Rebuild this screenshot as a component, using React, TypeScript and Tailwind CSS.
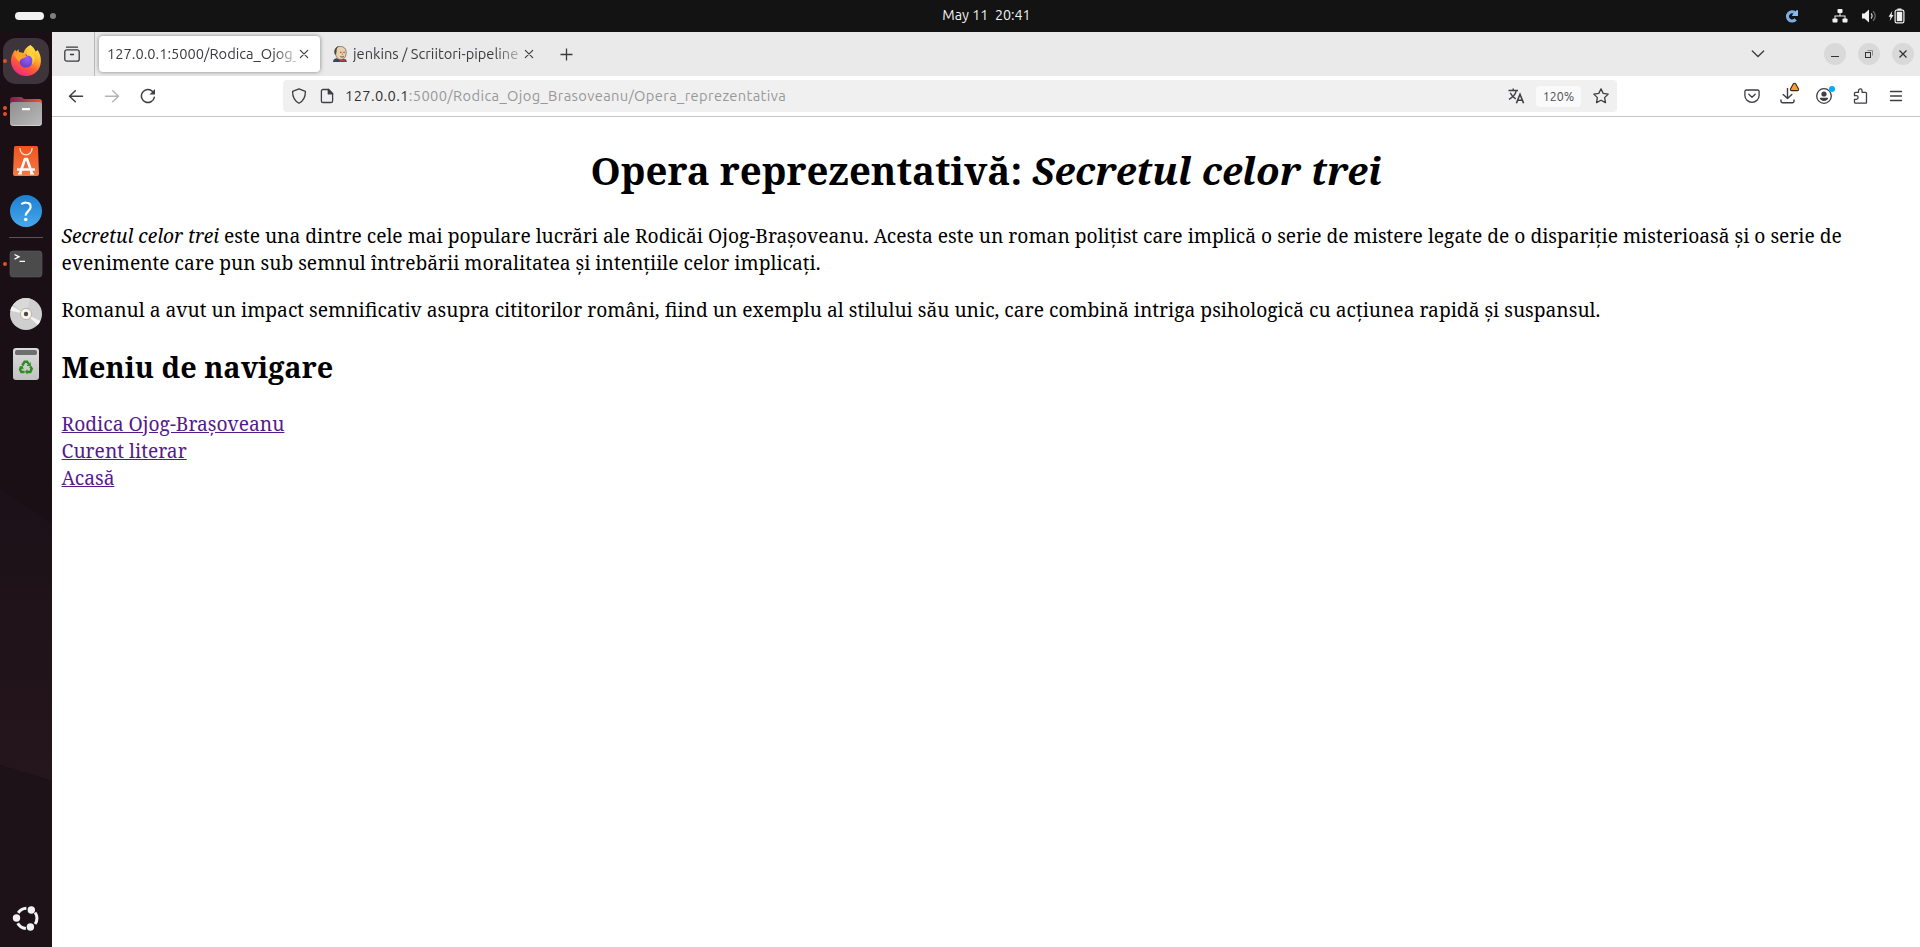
import React, { ReactNode } from "react";

/* ---------- shared icon wrapper ---------- */

function Line({ children, size = 16, className = "" }: { children: ReactNode; size?: number; className?: string }) {
  return (
    <svg
      width={size}
      height={size}
      viewBox="0 0 16 16"
      fill="none"
      stroke="currentColor"
      strokeWidth="1.3"
      strokeLinecap="round"
      strokeLinejoin="round"
      className={`block shrink-0 ${className}`}
    >
      {children}
    </svg>
  );
}

function CloseX() {
  return (
    <svg width="10" height="10" viewBox="0 0 10 10" fill="none" stroke="currentColor" strokeWidth="1.15" strokeLinecap="round" className="block shrink-0">
      <path d="M1.3 1.3l7.4 7.4M8.7 1.3L1.3 8.7" />
    </svg>
  );
}

/* ---------- top bar ---------- */

function TopBar() {
  return (
    <header className="flex h-8 shrink-0 items-center bg-[#131313] text-[#f2f2f2]">
      <div className="flex flex-1 items-center gap-1.5 pl-[15px]">
        <span className="h-2 w-[29px] rounded-full bg-[#f2f2f2]" />
        <span className="size-1.5 rounded-full bg-[#7f7f7f]" />
      </div>
      <div className="whitespace-pre pl-[53px] text-[14.3px] leading-[30px] pb-0.5">{"May 11  20:41"}</div>
      <div className="flex flex-1 items-center justify-end pr-[15px]">
        <svg width="14" height="14" viewBox="0 0 14 14" className="mr-[33px] block translate-y-[0.5px]">
          <path d="M10.6 9.9A4.6 4.6 0 1 1 10 3.3" fill="none" stroke="#79aee6" strokeWidth="3.2" />
          <path d="M7.2 6.6V5.4L9.6 3.2 11.4.8H13v5.8z" fill="#8dbcec" />
        </svg>
        <svg width="16" height="14" viewBox="0 0 16 14" fill="#f2f2f2" className="mr-3.5 block">
          <rect x="5.5" y="0" width="5" height="4" rx=".8" />
          <rect x="0.5" y="9.5" width="5" height="4" rx=".8" />
          <rect x="10.5" y="9.5" width="5" height="4" rx=".8" />
          <path d="M7.5 4h1v2.5h5V10h-1V7.5h-9V10h-1V6.5h5z" />
        </svg>
        <svg width="16" height="14" viewBox="0 0 16 14" className="mr-2.5 block">
          <path d="M0 4.5h2.5L7 .4v13.2L2.5 9.500H0z" fill="#f2f2f2" />
          <path d="M9 4.6a3.2 3.2 0 0 1 0 4.8" fill="none" stroke="#d0d0d0" strokeWidth="1.3" />
          <path d="M11 2.2a6.3 6.3 0 0 1 0 9.6" fill="none" stroke="#6b6b6b" strokeWidth="1.3" />
        </svg>
        <svg width="17" height="16" viewBox="0 0 17 16" className="block">
          <path d="M4.3 3L.6 8.8h2L1.7 13l3.8-5.900H3.6z" fill="#f2f2f2" />
          <path d="M9.5 0.5h4v1.500h-4z" fill="#f2f2f2" />
          <rect x="7.1" y="2.1" width="8.8" height="12.8" rx="1.6" fill="none" stroke="#f2f2f2" strokeWidth="1.2" />
          <rect x="8.8" y="3.8" width="5.4" height="9.4" fill="#f2f2f2" />
        </svg>
      </div>
    </header>
  );
}

/* ---------- dock ---------- */

function DockItem({ children, dots = 0 }: { children: ReactNode; dots?: number }) {
  return (
    <svg width="52" height="50" viewBox="0 0 52 50" className="block shrink-0">
      {dots === 1 && <circle cx="5" cy="25" r="2" fill="#e4511f" />}
      {dots === 2 && (
        <>
          <circle cx="5" cy="22" r="2" fill="#e4511f" />
          <circle cx="5" cy="28" r="2" fill="#e4511f" />
        </>
      )}
      {children}
    </svg>
  );
}

function Dock() {
  return (
    <nav className="relative flex w-[52px] shrink-0 flex-col overflow-hidden bg-[#190f15] pt-1">
      <svg width="52" height="915" viewBox="0 0 52 915" className="absolute left-0 top-0" preserveAspectRatio="none">
        <defs>
          <linearGradient id="wall" x1="0" y1="0" x2="0" y2="1">
            <stop offset="0" stopColor="#1c1118" />
            <stop offset="1" stopColor="#25151c" />
          </linearGradient>
        </defs>
        <path d="M0 458L52 492V749L0 733z" fill="url(#wall)" />
        <path d="M0 733L52 749V915H0z" fill="#1d1218" />
      </svg>
      <div className="relative flex flex-1 flex-col">
        <DockItem>
          <defs>
            <linearGradient id="ffBody" x1=".8" y1="0" x2=".25" y2="1">
              <stop offset="0" stopColor="#fff14f" />
              <stop offset=".35" stopColor="#ffb22c" />
              <stop offset=".65" stopColor="#ff5a35" />
              <stop offset="1" stopColor="#f0208a" />
            </linearGradient>
            <radialGradient id="ffGlobe" cx=".6" cy=".3" r=".8">
              <stop offset="0" stopColor="#9a5cf5" />
              <stop offset="1" stopColor="#5a3bc4" />
            </radialGradient>
          </defs>
          <rect x="3" y="2" width="46" height="46" rx="13" fill="#3e343b" />
          <circle cx="5" cy="25" r="2" fill="#e4511f" />
          <path
            d="M30.4 9c2.600 1.700 4.400 4.200 5.200 6.400 1-.3 1.600-1 2-1.500 2.300 3.600 3.600 7.400 3.300 11.800C40.400 34 34 40 26.200 40 17.800 40 11.200 33.600 11 25.200c0-4 1.200-7.200 3-9.900l1.300-1.500.8 2 2.400-2.500.5 3.400c1.500-.4 3-.3 4.500.4 1-3.500 3.400-6.500 6.900-8.100z"
            fill="url(#ffBody)"
          />
          <circle cx="26" cy="25" r="6.600" fill="url(#ffGlobe)" />
          <path d="M14 18.500c3-2.700 6.300-2.900 9-1.200l4 3.200c-1.700.2-2.400 1.600-4.300 2.100-1.900.6-3.200 1.600-2.700 3.500-2.500-1.700-4.500-4.400-6-7.600z" fill="#ffa22b" />
          <path d="M27 19.500c2.200-.4 4.200.8 5.200 2.700.8 2 .5 4.400-.9 6.200 3.400-1.600 4.600-6 2.500-9.400-1.600-2.300-3.300-4.300-3.400-7.600-2.600 2.200-4 4.700-3.400 8.100z" fill="#ffd13b" />
        </DockItem>
        <DockItem dots={2}>
          <defs>
            <linearGradient id="folderBack" x1="0" y1="0" x2="1" y2="0">
              <stop offset="0" stopColor="#7a2150" />
              <stop offset="1" stopColor="#ec5a28" />
            </linearGradient>
            <linearGradient id="folderFront" x1="0" y1="0" x2="1" y2="1">
              <stop offset="0" stopColor="#8f8f8f" />
              <stop offset="1" stopColor="#bababa" />
            </linearGradient>
          </defs>
          <path d="M10 24V14a3 3 0 0 1 3-3h8c1.500 0 2 2 3.500 2H39a3 3 0 0 1 3 3v10z" fill="url(#folderBack)" />
          <rect x="10" y="16" width="32" height="24" rx="3" fill="url(#folderFront)" />
          <path d="M11 37.500c.6 1.600 1.600 2 2.500 2h25c1 0 2-.6 2.600-2" fill="none" stroke="#d6d6d6" strokeWidth=".8" />
          <rect x="22" y="22" width="8" height="2.200" rx=".6" fill="#fff" />
        </DockItem>
        <DockItem>
          <defs>
            <linearGradient id="bag" x1="0" y1="0" x2="0" y2="1">
              <stop offset="0" stopColor="#f4511e" />
              <stop offset="1" stopColor="#f07b48" />
            </linearGradient>
          </defs>
          <path d="M15.500 10h21a1.500 1.500 0 0 1 1.500 1.500L39 38a2 2 0 0 1-2 2H15a2 2 0 0 1-2-2l1-26.500A1.500 1.500 0 0 1 15.500 10z" fill="url(#bag)" />
          <path d="M20 12v.8a6 6 0 0 0 12 0V12" fill="none" stroke="#ffe3d6" strokeWidth="1.300" />
          <path d="M20 37.500l5-14.500h2l5 14.500" fill="none" stroke="#fff" strokeWidth="2.600" strokeLinejoin="round" />
          <path d="M17 33.500h18" stroke="#fff" strokeWidth="2.400" />
          <path d="M18 37.800h4M30 37.800h4" stroke="#fff" strokeWidth="1.400" />
        </DockItem>
        <DockItem>
          <defs>
            <linearGradient id="help" x1="0" y1="0" x2="0" y2="1">
              <stop offset="0" stopColor="#1c7fd2" />
              <stop offset="1" stopColor="#48a8ea" />
            </linearGradient>
          </defs>
          <circle cx="26" cy="25" r="16" fill="url(#help)" />
          <path d="M21.300 18.200c1.600-1.100 3.300-1.700 5-1.500 2.600.2 4.400 1.800 4.300 4.200 0 4.100-5 4.300-4.900 8.700" fill="none" stroke="#fff" strokeWidth="2.200" />
          <circle cx="25.700" cy="33.500" r="1.800" fill="#fff" />
        </DockItem>
        <div className="flex h-[3px] shrink-0 items-center justify-center">
          <div className="h-px w-[34px] bg-[#5b5357]" />
        </div>
        <DockItem dots={1}>
          <rect x="10" y="12" width="32" height="26" rx="3" fill="#4b4b4b" stroke="#5c5c5c" strokeWidth=".6" />
          <path d="M14.500 15.500l4.500 2.300-4.500 2.300M19.500 22.300h5.500" fill="none" stroke="#fff" strokeWidth="1.300" />
        </DockItem>
        <DockItem>
          <circle cx="26" cy="25" r="16" fill="#cfcfcf" />
          <path d="M26 25L12 17.300a16 16 0 0 0-1.800 4.500zM26 25l14.400 7a16 16 0 0 1-2.600 3.900z" fill="#f4f4f4" />
          <path d="M26 25L13 15.700A16 16 0 0 1 30 9.600z" fill="#d9d9d9" />
          <circle cx="26" cy="25" r="5.600" fill="#f7f5ee" stroke="#b8b09a" strokeWidth=".9" />
          <circle cx="26" cy="25" r="2.200" fill="#4a4a4a" />
        </DockItem>
        <DockItem>
          <defs>
            <linearGradient id="bin" x1="0" y1="0" x2="0" y2="1">
              <stop offset="0" stopColor="#dcdcdc" />
              <stop offset="1" stopColor="#c2c2c2" />
            </linearGradient>
          </defs>
          <rect x="13" y="9" width="26" height="32" rx="3" fill="url(#bin)" />
          <rect x="15" y="11" width="22" height="5" rx="1.800" fill="#6f6f6f" />
          <g fill="none" stroke="#2c8c22" strokeWidth="2.500">
            <path d="M22.300 26.500l2.300-3.800h2.600l1.300 2.300" />
            <path d="M30.300 27.300l1.400 2.500-1.400 3.200h-3.500" />
            <path d="M24.600 33h-3.200l-1.300-2.500 1.200-2.300" />
          </g>
          <path d="M30.800 23v4h-4.300zM27.500 30.200v5.200l-2.600-2.600zM18.800 28l3.800-1.300 1 3.700z" fill="#2c8c22" />
        </DockItem>
        <div className="mt-auto mb-1 flex shrink-0">
          <DockItem>
            <g fill="none" stroke="#f2f2f2" strokeWidth="3">
              <path d="M18.200 19.800A10.500 10.500 0 0 1 26.400 15.200" />
              <path d="M35.100 19.500A10.500 10.500 0 0 1 35.100 31" />
              <path d="M17.700 30.200A10.500 10.500 0 0 0 25.900 35.500" />
            </g>
            <circle cx="31.300" cy="17" r="3.700" fill="#f2f2f2" />
            <circle cx="16.500" cy="25" r="3.700" fill="#f2f2f2" />
            <circle cx="30.400" cy="34" r="3.700" fill="#f2f2f2" />
          </DockItem>
        </div>
      </div>
    </nav>
  );
}

/* ---------- browser chrome ---------- */

function Jenkins() {
  return (
    <svg width="16" height="16" viewBox="0 0 16 16" className="block shrink-0">
      <path d="M1 16c0-2 1-3.300 3.500-3.800l4 1.200 3.500-.6c2 .4 2.700 1.500 2.700 3.200z" fill="#2f4a5e" />
      <path d="M3.200 6C2.800 2.500 5 .4 8.300.4c3.600 0 5.900 2.200 5.900 5.800 0 4-1.700 7.500-5.400 7.500-3.300 0-5-3-5.600-7.700z" fill="#ecd0ac" stroke="#4c4038" strokeWidth=".6" />
      <path d="M2.800 8.500C1.500 5 3 .8 7 .3 5 1.500 4.500 3 4.600 5.600L4 8.500z" fill="#4b4642" />
      <path d="M8 6.300h1.500M11.300 6.300h1.500M8.300 10.600c1.300.6 2.500.5 3.600-.1" stroke="#3d3029" strokeWidth=".8" fill="none" />
      <path d="M10.300 7v1.800h1" stroke="#b48a68" strokeWidth=".7" fill="none" />
      <path d="M7.500 13l2.600 1.200L13 13v3l-2.900-1L7.500 16z" fill="#d33833" />
    </svg>
  );
}

function TabStrip() {
  return (
    <div className="flex h-11 shrink-0 items-center bg-[#eaeaea] text-[14.667px] text-[#3b3b3f]">
      <div className="flex h-full w-[43px] items-center justify-center border-r border-[#b9b9b9] pr-0.5">
        <Line>
          <path d="M2.500 1.200h11" />
          <rect x=".8" y="3.800" width="14.400" height="11.400" rx="2" />
          <path d="M6.500 8.500h3" />
        </Line>
      </div>
      <div className="ml-1 flex h-9 w-[221px] items-center rounded bg-white pl-2 pr-[11px] shadow-[0_0_4px_rgba(0,0,0,0.45)]">
        <div className="h-6 w-[189px] overflow-hidden whitespace-nowrap leading-6 [mask-image:linear-gradient(to_right,#000_88%,rgba(0,0,0,0.25))]">
          127.0.0.1:5000/Rodica_Ojog_
        </div>
        <div className="ml-[3px]">
          <CloseX />
        </div>
      </div>
      <div className="ml-3 flex h-9 items-center">
        <Jenkins />
        <div className="ml-[5px] h-6 w-[166px] overflow-hidden whitespace-nowrap leading-6 [mask-image:linear-gradient(to_right,#000_85%,rgba(0,0,0,0.3))]">
          jenkins / Scriitori-pipeline
        </div>
        <div className="ml-[5px]">
          <CloseX />
        </div>
      </div>
      <svg width="14" height="14" viewBox="0 0 14 14" fill="none" stroke="currentColor" strokeWidth="1.300" className="ml-[25px] block">
        <path d="M7.5 1.500v12M1.500 7.500h12" />
      </svg>
      <div className="ml-auto flex items-center pr-1.5">
        <svg width="14" height="8" viewBox="0 0 14 8" fill="none" stroke="currentColor" strokeWidth="1.300" className="mr-[59px] block" strokeLinecap="round">
          <path d="M1.300 1l5.700 5.500L12.700 1" />
        </svg>
        <div className="flex gap-3">
          <span className="flex size-[22px] items-center justify-center rounded-full bg-[#d9d9d9]">
            <svg width="10" height="10" viewBox="0 0 10 10" className="block"><path d="M1 7h8v1H1z" fill="#333" /></svg>
          </span>
          <span className="flex size-[22px] items-center justify-center rounded-full bg-[#d9d9d9]">
            <svg width="10" height="10" viewBox="0 0 10 10" fill="none" className="block">
              <path d="M3.500 1.500h5v5" stroke="#8c8c8c" />
              <rect x="1.500" y="3.500" width="5" height="5" stroke="#333" />
            </svg>
          </span>
          <span className="flex size-[22px] items-center justify-center rounded-full bg-[#d9d9d9] text-[#333]">
            <svg width="10" height="10" viewBox="0 0 10 10" stroke="currentColor" strokeWidth="1.300" className="block"><path d="M1.500 1.500l7 7M8.500 1.500l-7 7" /></svg>
          </span>
        </div>
      </div>
    </div>
  );
}

function Toolbar() {
  return (
    <div className="flex h-[41px] shrink-0 items-center border-b border-[#c6c6c6] bg-white text-[#3e3e43]">
      <div className="flex w-[231px] items-center gap-5 pl-4">
        <Line>
          <path d="M14.500 8.200H1.800M7.300 2.700L1.500 8.200l5.800 5.500" strokeWidth="1.500" />
        </Line>
        <Line className="text-[#b4b4b6]">
          <path d="M1.500 8.200h12.700M8.700 2.700l5.800 5.500-5.800 5.500" strokeWidth="1.500" />
        </Line>
        <Line>
          <path d="M14.300 9.300A6.500 6.500 0 1 1 12.600 3.500" strokeWidth="1.500" />
          <path d="M15 1v5.500H9.500z" fill="currentColor" stroke="none" />
        </Line>
      </div>
      <div className="flex h-8 w-[1334px] items-center rounded bg-[#f0f0f0] pl-2 pr-2">
        <Line>
          <path d="M8 .8l6.400 2.500c.1 5-1.400 9.300-6.400 12-5-2.700-6.500-7-6.400-12z" />
        </Line>
        <Line className="ml-3">
          <path d="M9.500 1.500H4a1.600 1.600 0 0 0-1.600 1.600v9.800A1.600 1.600 0 0 0 4 14.500h8a1.600 1.600 0 0 0 1.600-1.600V5.600z" />
          <path d="M9.300 1.300l4.400 4.500H9.300z" fill="currentColor" />
        </Line>
        <div className="ml-[10px] whitespace-nowrap text-[14.667px] leading-8 tracking-[0.375px] text-[#98989a]">
          <span className="text-[#303034]">127.0.0.1</span>:5000/Rodica_Ojog_Brasoveanu/Opera_reprezentativa
        </div>
        <svg width="17" height="16" viewBox="0 0 17 16" fill="none" stroke="currentColor" strokeWidth="1.400" className="ml-auto block">
          <path d="M.5 2.500h9.500M5.200.5v2M2.200 4.800c1.300 2.800 3.300 4.700 5.600 6M8.300 2.700c-.9 3.800-3.500 6.700-7.300 8.600" />
          <path d="M8.400 15.300l3.600-9 3.600 9M9.600 12.300h4.800" strokeWidth="1.600" />
        </svg>
        <div className="ml-[11px] flex h-[21px] w-[45px] items-center justify-center rounded bg-[#fafafa] text-[12.400px] leading-5 text-[#4c4c55]">120%</div>
        <Line className="ml-3">
          <path d="M8 .9l2.200 4.500 5 .7-3.600 3.500.9 5L8 12.200l-4.500 2.400.9-5L.8 6.100l5-.7z" />
        </Line>
      </div>
      <div className="ml-auto flex items-center gap-5 pr-4">
        <Line>
          <path d="M2.500 2h11a1.600 1.600 0 0 1 1.600 1.600V7.500a7.100 6.800 0 0 1-14.200 0V3.600A1.600 1.600 0 0 1 2.500 2z" />
          <path d="M4.800 6.300L8 9.300l3.200-3" />
        </Line>
        <div className="relative">
          <Line>
            <path d="M7.500 .5v10M3.200 6.500l4.300 4.100 4.300-4.100M1 12v1.200a1.500 1.500 0 0 0 1.500 1.500h10a1.500 1.500 0 0 0 1.500-1.500V12" strokeWidth="1.400" />
          </Line>
          <svg width="11" height="10" viewBox="0 0 11 10" className="absolute -top-[6px] left-[9px]">
            <path d="M5.500 1.200c.6 0 1 .4 1.300.9l2.700 5c.3.700 0 1.500-.8 1.500H2.300c-.8 0-1.100-.8-.8-1.500l2.700-5c.3-.5.700-.9 1.300-.9z" fill="#ff9d2b" stroke="#33281c" strokeWidth="1.100" />
          </svg>
        </div>
        <div className="relative">
          <Line>
            <circle cx="8" cy="8" r="7.300" />
            <circle cx="8" cy="6" r="2.600" fill="currentColor" stroke="none" />
            <path d="M3.800 9.800h8.400c0 2-2 3.100-4.200 3.100s-4.200-1.100-4.200-3.100z" fill="currentColor" stroke="none" />
          </Line>
          <span className="absolute -top-[2px] left-[13px] size-1.5 rounded-full bg-[#00aeff]" />
        </div>
        <Line className="translate-x-[0.5px]">
          <path d="M6 4.300V2.700a1.800 1.800 0 0 1 3.600 0v1.600H13a1 1 0 0 1 1 1v9.200a.7.700 0 0 1-.7.700H3a1 1 0 0 1-1-1v-2.900h1.800a1.800 1.800 0 0 0 0-3.600H2V5.300a1 1 0 0 1 1-1z" />
        </Line>
        <Line>
          <path d="M2.500 3.500h11M2.500 8h11M2.500 12.500h11" strokeWidth="1.400" />
        </Line>
      </div>
    </div>
  );
}

/* ---------- page ---------- */

const links = ["Rodica Ojog-Brașoveanu", "Curent literar", "Acasă"];

function Page() {
  return (
    <main className="flex-1 bg-white px-[9.6px] pt-[27px] font-['Noto_Serif',serif] text-[19.2px] leading-[27px] text-black">
      <h1 className="text-center text-[38.4px] font-bold leading-[53px]">
        Opera reprezentativă: <i>Secretul celor trei</i>
      </h1>
      <p className="mt-[25px] text-[19.215px]">
        <i>Secretul celor trei</i> este una dintre cele mai populare lucrări ale Rodicăi Ojog-Brașoveanu. Acesta este un roman polițist care implică o
        serie de mistere legate de o dispariție misterioasă și o serie de evenimente care pun sub semnul întrebării moralitatea și intențiile celor
        implicați.
      </p>
      <p className="mt-5 text-[19.215px]">
        Romanul a avut un impact semnificativ asupra cititorilor români, fiind un exemplu al stilului său unic, care combină intriga psihologică cu
        acțiunea rapidă și suspansul.
      </p>
      <h2 className="mt-6 text-[28.8px] font-bold leading-10">Meniu de navigare</h2>
      <ul className="mt-[23px]">
        {links.map((label) => (
          <li key={label}>
            <a href="#" className="text-[#551a8b] underline">
              {label}
            </a>
          </li>
        ))}
      </ul>
    </main>
  );
}

export default function App() {
  return (
    <div className="flex h-screen w-full flex-col overflow-hidden font-['Ubuntu','Noto_Sans',sans-serif]">
      <TopBar />
      <div className="flex min-h-0 flex-1">
        <Dock />
        <div className="flex min-w-0 flex-1 flex-col">
          <TabStrip />
          <Toolbar />
          <Page />
        </div>
      </div>
    </div>
  );
}
